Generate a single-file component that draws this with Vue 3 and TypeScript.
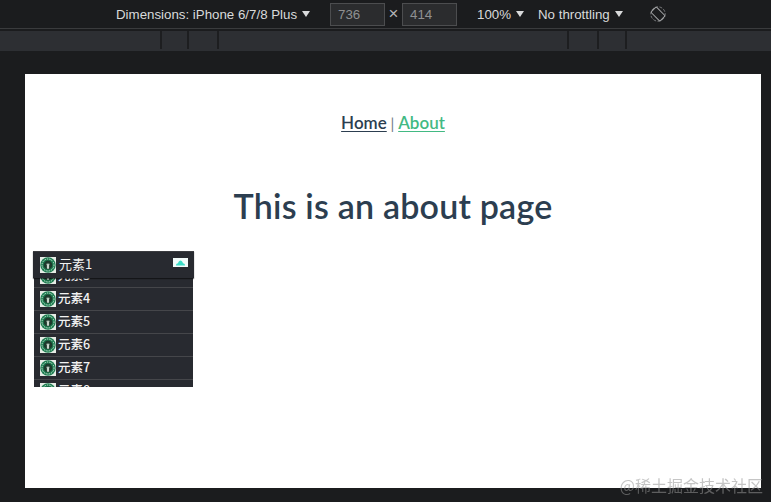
<script setup lang="ts">
const rows: string[] = ['元素3', '元素4', '元素5', '元素6', '元素7', '元素8']
const ticks: number[] = [160, 187, 217, 567, 597, 625]
</script>

<template>
  <div class="devtools">
    <header class="toolbar">
      <span class="label dims">Dimensions: iPhone 6/7/8 Plus<i class="caret"></i></span>
      <span class="field">736</span>
      <span class="times">×</span>
      <span class="field">414</span>
      <span class="label zoom">100%<i class="caret"></i></span>
      <span class="label throttle">No throttling<i class="caret"></i></span>
      <svg class="rotate" width="18" height="18" viewBox="0 0 18 18" fill="none">
        <circle cx="9" cy="9" r="7.2" stroke="#8d8e90" stroke-width="0.8" stroke-dasharray="3 1.4" />
        <rect x="5.2" y="2.6" width="7.6" height="12.8" rx="1.2" transform="rotate(-45 9 9)" fill="#1b1c1e" stroke="#a4a5a7" stroke-width="1" />
      </svg>
    </header>
    <div class="ruler">
      <i v-for="t in ticks" :key="t" class="tick" :style="{ left: t + 'px' }"></i>
    </div>
    <main class="viewport">
      <nav class="nav">
        <a class="home">Home</a><span class="sep"> | </span><a class="about">About</a>
      </nav>
      <h1 class="title">This is an about page</h1>

      <section class="float-list">
        <div class="scroller">
          <div v-for="r in rows" :key="r" class="row">
            <svg class="logo" viewBox="0 0 16 16">
              <rect width="16" height="16" fill="#e6ece6" />
              <circle cx="8" cy="8" r="7.7" fill="#1c7d50" />
              <circle cx="8" cy="8" r="6" fill="none" stroke="#cfe3d6" stroke-width="1" stroke-dasharray="1.400 1" />
              <circle cx="8" cy="8" r="4.400" fill="#1d3a2c" />
              <path d="M6.900 11.800V8.200L6.200 6.600l1.100.6L8 5.800l.7 1.400 1.100-.6-.7 1.600v3.600z" fill="#c9d6cc" />
            </svg>
            <span>{{ r }}</span>
          </div>
        </div>
        <div class="head">
          <svg class="logo" viewBox="0 0 16 16">
            <rect width="16" height="16" fill="#e6ece6" />
            <circle cx="8" cy="8" r="7.7" fill="#1c7d50" />
            <circle cx="8" cy="8" r="6" fill="none" stroke="#cfe3d6" stroke-width="1" stroke-dasharray="1.400 1" />
            <circle cx="8" cy="8" r="4.400" fill="#1d3a2c" />
            <path d="M6.900 11.800V8.200L6.200 6.600l1.100.6L8 5.800l.7 1.400 1.100-.6-.7 1.600v3.600z" fill="#c9d6cc" />
          </svg>
          <span class="head-text">元素1</span>
          <svg class="cloud" width="15" height="9" viewBox="0 0 15 9">
            <rect width="15" height="9" fill="#f2fbfa" />
            <path d="M3 7.500C3 6 4 5.200 5 5.200 5.600 3.400 6.500 2.500 7.500 2.500s1.900.9 2.500 2.700c1 0 2 .8 2 2.300z" fill="#3bdcc6" />
          </svg>
        </div>
      </section>
    </main>
    <div class="mark">@稀土掘金技术社区</div>
  </div>
</template>

<style>
html, body { margin: 0; background: #1b1c1e; overflow: hidden; }
</style>

<style scoped>
.devtools {
  position: relative;
  width: 771px;
  height: 502px;
  overflow: hidden;
  background: #1b1c1e;
  font-family: "Liberation Sans", Arial, sans-serif;
}
.toolbar {
  display: flex;
  align-items: center;
  height: 29px;
  box-sizing: border-box;
  border-bottom: 1px solid #3a3b3d;
  padding-left: 116px;
  color: #d9dadb;
  font-size: 13.300px;
}
.label { display: inline-flex; align-items: center; white-space: nowrap; }
.caret {
  width: 0;
  height: 0;
  margin-left: 5px;
  border-left: 4px solid transparent;
  border-right: 4px solid transparent;
  border-top: 6px solid #d9dadb;
}
.dims { width: 214px; }
.field {
  box-sizing: border-box;
  width: 55px;
  height: 23px;
  line-height: 21px;
  border: 1px solid #4c4d4f;
  background: #2b2c2e;
  color: #8f9092;
  padding-left: 7px;
}
.times { width: 17px; text-align: center; color: #b4b5b7; font-size: 17px; }
.zoom { margin-left: 20px; width: 61px; }
.throttle { width: 111px; }
.rotate { display: block; }
.ruler {
  position: relative;
  height: 20px;
  margin-top: 2px;
  background: #2d2f33;
}
.tick {
  position: absolute;
  top: 0;
  width: 2px;
  height: 18px;
  background: #1d1e20;
}
.viewport {
  position: relative;
  box-sizing: border-box;
  margin: 23px 0 0 25px;
  width: 736px;
  height: 414px;
  padding-top: 39px;
  background: #fff;
  font-family: Lato, "Noto Sans CJK SC", sans-serif;
  text-align: center;
  color: #2c3e50;
}
.nav { font-size: 17px; line-height: 20px; font-weight: 600; }
.home, .about { text-decoration: underline; text-underline-offset: 2px; }
.sep { font-weight: 400; color: #6b7885; font-size: 15px; }
.about { color: #42b983; }
.title {
  margin: 50px 0 0;
  font-size: 34px;
  line-height: 46px;
  font-weight: 600;
  letter-spacing: 0.2px;
}
.float-list {
  position: absolute;
  left: 8px;
  top: 177px;
  width: 161px;
  text-align: left;
  color: #f2f2f2;
  font-family: "Noto Sans CJK SC", sans-serif;
  font-size: 12.500px;
  font-weight: 500;
}
.head {
  position: absolute;
  left: 0;
  top: 0;
  right: 0;
  display: flex;
  align-items: center;
  gap: 2px;
  box-sizing: border-box;
  height: 27px;
  padding: 0 6px 0 7px;
  background: #282a30;
  border-top: 1px solid #3b3c40;
  box-shadow: 0 1px 1px rgba(0, 0, 0, 0.5);
  font-size: 13px;
  font-weight: 400;
}
.row span { margin-bottom: 4px; }
.head-text { margin: 0 0 3px 1px; }
.cloud { margin: 0 0 5px auto; }
.scroller {
  box-sizing: border-box;
  width: 159px;
  height: 135px;
  margin: 1px 0 0 1px;
  overflow: hidden;
  background: #282a30;
}
.row {
  display: flex;
  align-items: center;
  gap: 2px;
  box-sizing: border-box;
  height: 23px;
  padding-left: 6px;
  border-bottom: 1px solid #45464a;
}
.row:first-child { margin-top: 13px; }
.logo { width: 16px; height: 16px; flex: none; display: block; }
.mark {
  position: absolute;
  right: 8px;
  top: 474px;
  color: rgba(150, 150, 150, 0.55);
  font-family: "Noto Sans CJK SC", sans-serif;
  font-size: 16px;
  line-height: 22px;
  filter: blur(0.6px);
}
</style>
